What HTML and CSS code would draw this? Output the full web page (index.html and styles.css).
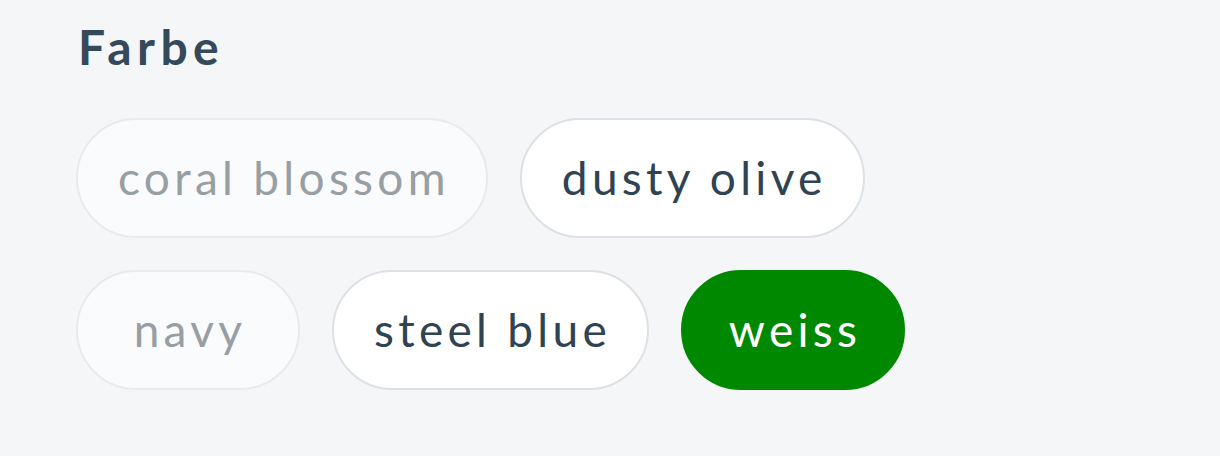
FILE: index.html
```html
<!DOCTYPE html>
<html lang="de">
<head>
<meta charset="utf-8">
<title>Farbe</title>
<link rel="stylesheet" href="styles.css">
</head>
<body>
<section class="filter">
  <h2 class="filter-title">Farbe</h2>
  <div class="chips">
    <button class="chip chip--disabled">coral blossom</button>
    <button class="chip">dusty olive</button>
    <button class="chip chip--disabled">navy</button>
    <button class="chip">steel blue</button>
    <button class="chip chip--selected">weiss</button>
  </div>
</section>
</body>
</html>
```
FILE: styles.css
```css
html, body {
  margin: 0;
  padding: 0;
  background: #f5f6f8;
}
body {
  font-family: Lato, "Noto Sans", sans-serif;
  width: 1220px;
  height: 456px;
}
.filter {
  padding: 20px 0 0 76px;
}
.filter-title {
  margin: 0 0 0 2px;
  font-size: 48px;
  line-height: 54px;
  font-weight: 700;
  color: #34495a;
  letter-spacing: 5.4px;
}
.chips {
  margin-top: 44px;
  display: flex;
  flex-wrap: wrap;
  gap: 32px;
  width: 860px;
}
.chip {
  box-sizing: border-box;
  min-width: 224px;
  height: 120px;
  padding: 0 36px 0 40px;
  border: 2px solid #dde1e6;
  border-radius: 60px;
  background: #ffffff;
  color: #2f4352;
  font-family: inherit;
  font-size: 46px;
  letter-spacing: 4.3px;
  line-height: 1;
  text-align: center;
  cursor: pointer;
}
.chip--disabled {
  background: #fafbfc;
  border-color: #e8ebee;
  color: #979fa5;
}
.chip--selected {
  background: #008800;
  border-color: #008800;
  color: #ffffff;
}
```
